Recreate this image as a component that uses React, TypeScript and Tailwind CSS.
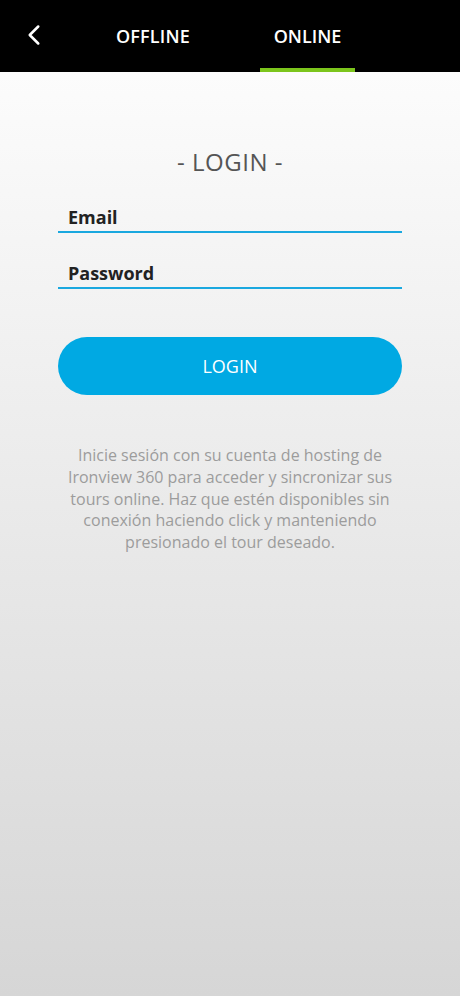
import { ChevronLeft } from 'lucide-react';

const font = { fontFamily: '"Open Sans", "Noto Sans", sans-serif' };

function Field({ label }: { label: string }) {
  return (
    <div className="border-b-2 border-[#1aa8df] pl-[10px] pb-[1px]">
      <span className="text-[18px] font-bold text-[#222] leading-[24px]">{label}</span>
    </div>
  );
}

export default function App() {
  return (
    <div style={font} className="w-[460px] h-[996px] flex flex-col bg-gradient-to-b from-white to-[#d6d6d6]">
      <header className="h-[72px] bg-black flex items-stretch shrink-0">
        <button className="w-[70px] flex items-center justify-center text-white">
          <ChevronLeft size={34} strokeWidth={1.8} className="-ml-[2px] -mt-[2px]" />
        </button>
        <div className="w-[166px] flex items-center justify-center text-white text-[18px] font-semibold tracking-[0.2px]">
          OFFLINE
        </div>
        <div className="w-[95px] ml-[24px] flex flex-col items-center text-white text-[18px] font-semibold">
          <span className="flex-1 flex items-center pt-[4px]">ONLINE</span>
          <span className="h-[4px] w-full bg-[#7cc51c]" />
        </div>
      </header>
      <main className="px-[58px] flex flex-col">
        <h1 className="mt-[74px] text-center text-[24px] text-[#555] leading-[32px] tracking-[0.5px]">- LOGIN -</h1>
        <div className="mt-[27px] flex flex-col gap-[28px]">
          <Field label="Email" />
          <Field label="Password" />
        </div>
        <button className="mt-[48px] h-[58px] rounded-full bg-[#00a9e3] text-white text-[18px]">LOGIN</button>
        <p className="mt-[50px] -mx-[2px] text-center text-[16px] leading-[21.75px] text-[#9c9c9c]">
          Inicie sesión con su cuenta de hosting de Ironview 360 para acceder y sincronizar sus tours online. Haz que estén disponibles sin conexión haciendo click y manteniendo presionado el tour deseado.
        </p>
      </main>
    </div>
  );
}
